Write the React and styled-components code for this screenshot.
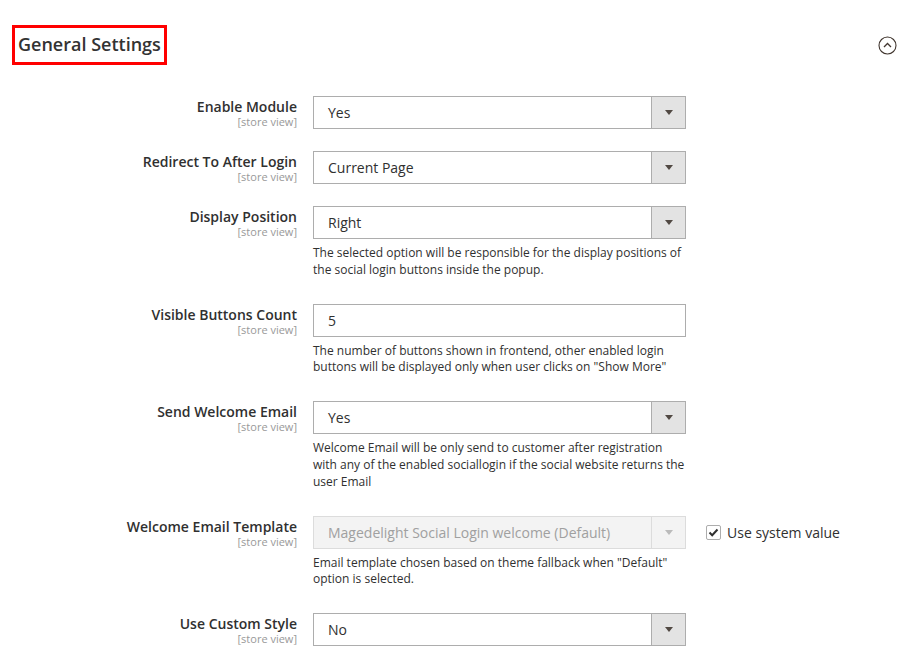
import React from "react";
import styled, { createGlobalStyle } from "styled-components";

const Global = createGlobalStyle`
  html, body { margin: 0; padding: 0; background: #fff; }
  body { font-family: "Open Sans", "Liberation Sans", sans-serif; color: #303030; }
  * { box-sizing: border-box; }
`;

const Page = styled.div`
  width: 908px;
  padding-top: 25px;
`;

const Header = styled.div`
  display: flex;
  align-items: center;
  justify-content: space-between;
  padding: 0 11px 0 12px;
  margin-bottom: 31px;
`;

const Title = styled.h2`
  margin: 0;
  border: 3px solid #f00;
  padding: 3px 3px 5px;
  font-size: 18px;
  line-height: 26px;
  font-weight: 600;
  color: #333;
  white-space: nowrap;
`;

const Collapse = styled.svg`
  width: 19px;
  height: 19px;
  display: block;
`;

const Row = styled.div`
  display: grid;
  grid-template-columns: 297px 373px auto;
  column-gap: 16px;
  margin-bottom: 22px;
`;

const LabelCol = styled.div`
  text-align: right;
  padding-top: 2px;
`;

const LabelText = styled.div`
  font-size: 14px;
  font-weight: 600;
  line-height: 18px;
  color: #303030;
`;

const Scope = styled.div`
  font-size: 11px;
  line-height: 12px;
  color: #999;
`;

const FieldCol = styled.div``;

const Box = styled.div`
  display: flex;
  height: 33px;
  border: 1px solid ${p => (p.$disabled ? "#dcdcdc" : "#adadad")};
  background: ${p => (p.$disabled ? "#f3f3f3" : "#fff")};
`;

const Value = styled.div`
  flex: 1;
  padding-left: 14px;
  font-size: 14px;
  line-height: 31px;
  color: ${p => (p.$disabled ? "#a0a0a0" : "#303030")};
`;

const Arrow = styled.div`
  width: 34px;
  border-left: 1px solid ${p => (p.$disabled ? "#dcdcdc" : "#adadad")};
  background: ${p => (p.$disabled ? "#f3f3f3" : "#e3e3e3")};
  display: flex;
  align-items: center;
  justify-content: center;
  &::after {
    content: "";
    border-left: 4px solid transparent;
    border-right: 4px solid transparent;
    border-top: 5px solid ${p => (p.$disabled ? "#bbb" : "#514943")};
  }
`;

const Note = styled.div`
  margin-top: 6px;
  margin-bottom: 3px;
  font-size: 12px;
  line-height: 16.8px;
  color: #303030;
`;

const SystemCol = styled.label`
  display: flex;
  align-items: center;
  gap: 6px;
  height: 33px;
  padding-left: 4px;
  font-size: 14px;
  color: #303030;
`;

const Check = styled.span`
  width: 15px;
  height: 15px;
  border: 1px solid #adadad;
  border-radius: 2px;
  background: #fff;
  display: flex;
  align-items: center;
  justify-content: center;
`;

const Select = ({ value, disabled }) => (
  <Box $disabled={disabled}>
    <Value $disabled={disabled}>{value}</Value>
    <Arrow $disabled={disabled} />
  </Box>
);

const Input = ({ value }) => (
  <Box>
    <Value>{value}</Value>
  </Box>
);

const rows = [
  { label: "Enable Module", type: "select", value: "Yes" },
  { label: "Redirect To After Login", type: "select", value: "Current Page" },
  {
    label: "Display Position",
    type: "select",
    value: "Right",
    note: "The selected option will be responsible for the display positions of the social login buttons inside the popup.",
  },
  {
    label: "Visible Buttons Count",
    type: "input",
    value: "5",
    note: 'The number of buttons shown in frontend, other enabled login buttons will be displayed only when user clicks on "Show More"',
  },
  {
    label: "Send Welcome Email",
    type: "select",
    value: "Yes",
    note: "Welcome Email will be only send to customer after registration with any of the enabled sociallogin if the social website returns the user Email",
  },
  {
    label: "Welcome Email Template",
    type: "select",
    value: "Magedelight Social Login welcome (Default)",
    disabled: true,
    system: true,
    note: 'Email template chosen based on theme fallback when "Default" option is selected.',
  },
  { label: "Use Custom Style", type: "select", value: "No" },
];

export default function App() {
  return (
    <Page>
      <Global />
      <Header>
        <Title>General Settings</Title>
        <Collapse viewBox="0 0 19 19">
          <circle cx="9.5" cy="9.5" r="8.5" fill="none" stroke="#41362f" strokeWidth="1.1" />
          <path d="M6 11 L9.5 7.5 L13 11" fill="none" stroke="#41362f" strokeWidth="1.3" />
        </Collapse>
      </Header>
      {rows.map(r => (
        <Row key={r.label}>
          <LabelCol>
            <LabelText>{r.label}</LabelText>
            <Scope>[store view]</Scope>
          </LabelCol>
          <FieldCol>
            {r.type === "select" ? (
              <Select value={r.value} disabled={r.disabled} />
            ) : (
              <Input value={r.value} />
            )}
            {r.note && <Note>{r.note}</Note>}
          </FieldCol>
          {r.system ? (
            <SystemCol>
              <Check>
                <svg width="11" height="9" viewBox="0 0 11 9">
                  <path d="M1.5 4.5 L4.2 7.2 L9.5 1.5" fill="none" stroke="#303030" strokeWidth="2" />
                </svg>
              </Check>
              Use system value
            </SystemCol>
          ) : (
            <div />
          )}
        </Row>
      ))}
    </Page>
  );
}
